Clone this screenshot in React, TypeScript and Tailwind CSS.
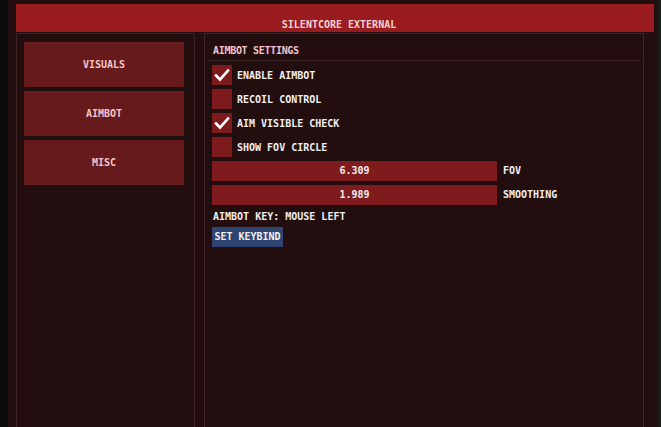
import { useState } from "react";

const font = { fontFamily: '"DejaVu Sans Mono", "Liberation Mono", monospace' };

function Check() {
  return (
    <svg width="16" height="14" viewBox="0 0 16 14">
      <path d="M2 7.5 L6 11.5 L14 2.5" stroke="#ffffff" strokeWidth="2.6" fill="none" strokeLinecap="square" />
    </svg>
  );
}

export default function App() {
  const [checks, setChecks] = useState([true, false, true, false]);
  const labels = ["ENABLE AIMBOT", "RECOIL CONTROL", "AIM VISIBLE CHECK", "SHOW FOV CIRCLE"];
  const tabs = ["VISUALS", "AIMBOT", "MISC"];

  return (
    <div className="w-[661px] h-[427px] flex bg-[#0c0c0c] overflow-hidden text-[10px] font-bold" style={font}>
      {/* strip at the left edge */}
      <div className="w-[8px] bg-[#0b0b0c]" />

      <div className="w-[650px] h-full bg-[#230e0f] pt-[4px] pl-[8px] pr-[4px] flex flex-col">
        {/* title */}
        <div className="h-[28px] bg-[#9b1c1f] flex items-end justify-center pb-[2px] pl-[8px] text-[#f5d2d2] leading-none">
          SILENTCORE EXTERNAL
        </div>

        <div className="flex flex-1 mt-[1px] gap-[9px] pr-[10px]">
          {/* tabs */}
          <div className="w-[179px] border border-[#3b2525] border-b-0 pt-[8px] pl-[7px] flex flex-col gap-[4px]">
            {tabs.map((t) => (
              <button
                key={t}
                className="w-[160px] h-[45px] bg-[#661a1b] text-[#f3c4cc] flex items-center justify-center leading-none"
              >
                {t}
              </button>
            ))}
          </div>

          {/* aimbot settings */}
          <div className="flex-1 border border-[#3b2525] border-b-0 flex flex-col">
            <div className="h-[26px] flex items-end pb-[4px] pl-[8px] text-[#f3c4cc] leading-none tracking-[-0.3px]">
              AIMBOT SETTINGS
            </div>
            <div className="h-px bg-[#3b2525] ml-[3px] mr-[2px]" />

            <div className="pl-[7px] pt-[4px] flex flex-col gap-[4px] text-[#f2eeee] leading-none">
              {labels.map((l, i) => (
                <div key={l} className="flex items-center h-[20px]">
                  <div
                    className="w-[20px] h-[20px] bg-[#7d1b1c] flex items-center justify-center"
                    onClick={() => setChecks(checks.map((c, j) => (j === i ? !c : c)))}
                  >
                    {checks[i] && <Check />}
                  </div>
                  <span className="ml-[5px] pt-[1px]">{l}</span>
                </div>
              ))}

              {[
                ["6.309", "FOV"],
                ["1.989", "SMOOTHING"],
              ].map(([v, l]) => (
                <div key={l} className="flex items-center h-[20px]">
                  <div className="w-[285px] h-[20px] bg-[#801b1d] flex items-center justify-center">{v}</div>
                  <span className="ml-[6px]">{l}</span>
                </div>
              ))}

              <div className="h-[16px] flex items-center pl-[1px]">AIMBOT KEY: MOUSE LEFT</div>
              <div className="-mt-[2px]">
                <button className="w-[71px] h-[20px] bg-[#2f4571] flex items-center justify-center">SET KEYBIND</button>
              </div>
            </div>
          </div>
        </div>
      </div>

      <div className="flex-1 bg-[#13201c]" />
    </div>
  );
}
